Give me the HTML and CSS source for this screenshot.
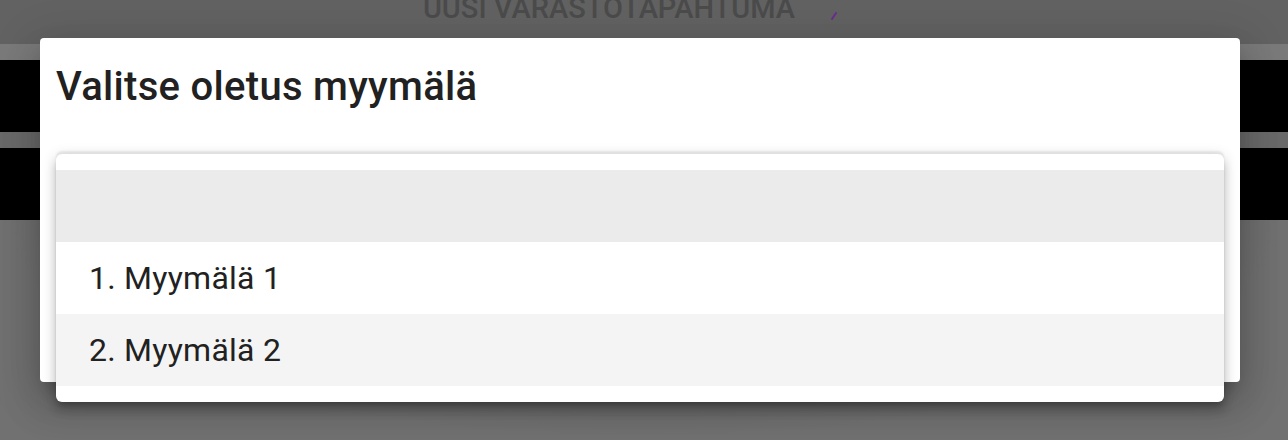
FILE: index.html
```html
<!DOCTYPE html>
<html lang="fi">
<head>
<meta charset="utf-8">
<title>Valitse oletus myymälä</title>
<link rel="stylesheet" href="styles.css">
</head>
<body>
<div class="page">
  <header class="topbar">
    <span class="topbar-title">UUSI VARASTOTAPAHTUMA</span>
    <svg class="spinner" width="6" height="8" viewBox="0 0 6 8"><path d="M1 7 L5 1" stroke="#6b2d8f" stroke-width="2" stroke-linecap="round"/></svg>
  </header>
  <div class="band band-light"></div>
  <div class="band band-black"></div>
  <div class="band band-gray"></div>
  <div class="band band-black"></div>
  <div class="rest"></div>
</div>

<div class="dialog">
  <h2 class="dialog-title">Valitse oletus myymälä</h2>
</div>

<ul class="menu">
  <li class="menu-item selected"></li>
  <li class="menu-item">1. Myymälä 1</li>
  <li class="menu-item hover">2. Myymälä 2</li>
</ul>
</body>
</html>
```
FILE: styles.css
```css
html, body {
  margin: 0;
  padding: 0;
  height: 100%;
  overflow: hidden;
}
body {
  font-family: Roboto, "Liberation Sans", sans-serif;
  background: #6b6b6b;
  position: relative;
}
.page {
  display: flex;
  flex-direction: column;
  height: 440px;
}
.topbar {
  height: 44px;
  background: #626262;
  display: flex;
  justify-content: center;
  align-items: flex-start;
  gap: 36px;
  overflow: hidden;
}
.topbar-title {
  font-size: 29px;
  font-weight: 500;
  color: #4b4b4b;
  line-height: 1;
  margin-top: -6px;
}
.spinner {
  margin-top: 12px;
  margin-right: 28px;
}
.band-light { height: 16px; background: linear-gradient(90deg, #7a7a7a, #767676 50%, #7a7a7a); }
.band-black { height: 72px; background: #000; }
.band-gray { height: 16px; background: #6a6a6a; }
.rest {
  flex: 1;
  background: radial-gradient(ellipse at 50% 0%, #4e4e4e 0%, #626262 35%, #717171 70%);
}

.dialog {
  position: absolute;
  left: 40px;
  top: 38px;
  width: 1200px;
  height: 344px;
  background: #fff;
  border-radius: 4px;
  box-shadow: 0 11px 15px -7px rgba(0,0,0,.2), 0 24px 38px 3px rgba(0,0,0,.14), 0 9px 46px 8px rgba(0,0,0,.12);
  box-sizing: border-box;
  padding: 0 16px;
}
.dialog-title {
  margin: 0;
  padding-top: 25px;
  font-size: 40px;
  font-weight: 500;
  line-height: 48px;
  letter-spacing: 0.3px;
  color: #212121;
}

.menu {
  position: absolute;
  left: 56px;
  top: 154px;
  width: 1168px;
  margin: 0;
  padding: 16px 0;
  list-style: none;
  background: #fff;
  border-radius: 6px;
  box-shadow: 0 -3px 2px rgba(0,0,0,.08), 0 5px 5px -3px rgba(0,0,0,.2), 0 8px 10px 1px rgba(0,0,0,.14), 0 3px 14px 2px rgba(0,0,0,.12);
}
.menu-item {
  height: 72px;
  display: flex;
  align-items: center;
  padding-left: 33px;
  font-size: 32px;
  letter-spacing: 0.25px;
  color: #212121;
  line-height: 1;
}
.menu-item.selected { background: #ebebeb; }
.menu-item.hover { background: #f4f4f4; }
```
